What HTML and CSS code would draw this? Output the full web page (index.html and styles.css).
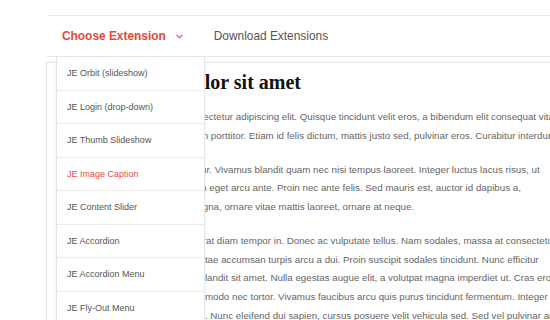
FILE: index.html
```html
<!DOCTYPE html>
<html>
<head>
<meta charset="utf-8">
<link rel="stylesheet" href="styles.css">
</head>
<body>
<div class="page">
  <nav class="nav">
    <ul class="nav-list">
      <li class="nav-item active">
        <span class="nav-label">Choose Extension</span>
        <svg class="chev" width="7" height="5" viewBox="0 0 7 5"><path d="M0.5 0.8 L3.5 3.8 L6.5 0.8" fill="none" stroke="#e8473c" stroke-width="1.1"/></svg>
        <ul class="dropdown">
          <li class="dd-item">JE Orbit (slideshow)</li>
          <li class="dd-item">JE Login (drop-down)</li>
          <li class="dd-item">JE Thumb Slideshow</li>
          <li class="dd-item current">JE Image Caption</li>
          <li class="dd-item">JE Content Slider</li>
          <li class="dd-item">JE Accordion</li>
          <li class="dd-item">JE Accordion Menu</li>
          <li class="dd-item">JE Fly-Out Menu</li>
        </ul>
      </li>
      <li class="nav-item"><span class="nav-label">Download Extensions</span></li>
    </ul>
  </nav>
  <main class="card">
    <h1 class="title">Lorem ipsum dolor sit amet</h1>
    <p class="para">Lorem ipsum dolor et amet consectetur adipiscing elit. Quisque tincidunt velit eros, a bibendum elit consequat vitae.<br>Nullam nec lectus sed ultricies, in porttitor. Etiam id felis dictum, mattis justo sed, pulvinar eros. Curabitur interdum nunc.</p>
    <p class="para">Maecenas sit amet et consectetur. Vivamus blandit quam nec nisi tempus laoreet. Integer luctus lacus risus, ut<br>Suspendisse ac, vel lorem ipsum eget arcu ante. Proin nec ante felis. Sed mauris est, auctor id dapibus a,<br>Pellentesque mollis ac tortor magna, ornare vitae mattis laoreet, ornare at neque.</p>
    <p class="para">Cras sit amet lacus volutpat et erat diam tempor in. Donec ac vulputate tellus. Nam sodales, massa at consectetur luctus<br>Phasellus porta sed lectus nisl vitae accumsan turpis arcu a dui. Proin suscipit sodales tincidunt. Nunc efficitur<br>Aenean viverra tellus maximus blandit sit amet. Nulla egestas augue elit, a volutpat magna imperdiet ut. Cras eros<br>Morbi lacus vehicula sed, in commodo nec tortor. Vivamus faucibus arcu quis purus tincidunt fermentum. Integer<br>Aliquam erat volutpat, sed lectus. Nunc eleifend dui sapien, cursus posuere velit vehicula sed. Sed vel pulvinar ante.</p>
  </main>
</div>
</body>
</html>
```
FILE: styles.css
```css
html, body {
  margin: 0;
  padding: 0;
  background: #ffffff;
  overflow: hidden;
}
body {
  font-family: "Liberation Sans", Arial, sans-serif;
  width: 550px;
  height: 320px;
}
.page {
  padding: 15px 0 0 47px;
  width: 700px;
}
.nav {
  border-top: 1px solid #e8e8e8;
  border-bottom: 1px solid #e8e8e8;
  height: 40px;
  position: relative;
  z-index: 2;
}
.nav-list {
  list-style: none;
  margin: 0;
  padding: 0;
  display: flex;
  height: 100%;
}
.nav-item {
  position: relative;
  display: flex;
  align-items: center;
  padding: 0 15px;
  font-size: 11.9px;
  color: #555555;
}
.nav-item.active {
  color: #e8473c;
  font-weight: bold;
  padding-right: 16px;
}
.chev {
  margin-left: 10px;
  margin-top: 1px;
}
.dropdown {
  position: absolute;
  top: 41px;
  left: 9px;
  width: 147px;
  margin: 0;
  padding: 0;
  list-style: none;
  background: #ffffff;
  border-left: 1px solid #e3e3e3;
  border-right: 1px solid #e6e6e6;
  box-shadow: 0 1px 3px rgba(0,0,0,0.05);
}
.dd-item {
  height: 32.5px;
  line-height: 32.5px;
  padding-left: 10px;
  border-bottom: 1px solid #ececec;
  font-size: 9px;
  font-weight: normal;
  color: #555555;
  white-space: nowrap;
}
.dd-item.current {
  color: #ec4d44;
}
.card {
  margin-top: 5px;
  margin-left: -1px;
  border: 1px solid #e6e6e6;
  box-shadow: 0 0 3px rgba(0,0,0,0.06);
  padding: 9px 0 20px 17px;
  height: 400px;
}
.title {
  margin: 0 0 16px;
  font-family: "Liberation Serif", "Times New Roman", serif;
  font-size: 20px;
  line-height: 20px;
  font-weight: bold;
  color: #111111;
}
.para {
  margin: 0 0 15px;
  font-size: 9.75px;
  line-height: 18.75px;
  color: #666666;
  white-space: nowrap;
}
```
